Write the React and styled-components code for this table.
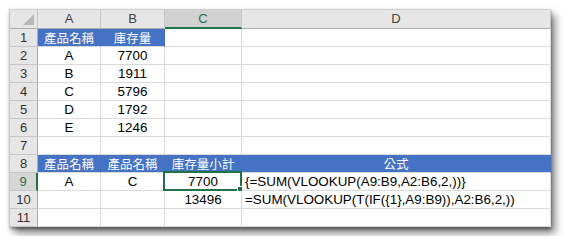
import React from "react";
import styled, { createGlobalStyle } from "styled-components";

const Global = createGlobalStyle`
  html, body { margin: 0; padding: 0; background: #fff; }
  body { font-family: "Liberation Sans", "Noto Sans CJK TC", sans-serif; }
`;

const Page = styled.div`
  padding: 9px;
  width: 541px;
`;

const Sheet = styled.div`
  display: grid;
  grid-template-columns: 28px 63px 64px 77px 309px;
  grid-template-rows: 19px repeat(11, 18px);
  background: #fff;
  box-shadow: 1px 2px 3px rgba(0,0,0,0.4), 5px 6px 8px rgba(0,0,0,0.5);
  border-left: 1px solid #c8c8c8;
  border-top: 1px solid #d0d0d0;
`;

const Corner = styled.div`
  position: relative;
  background: #e6e6e6;
  border-right: 1px solid #c6c6c6;
  border-bottom: 1px solid #ababab;
  box-sizing: border-box;
  &::after {
    content: "";
    position: absolute;
    right: 3px;
    bottom: 3px;
    width: 0;
    height: 0;
    border-left: 11px solid transparent;
    border-bottom: 11px solid #b8b8b8;
  }
`;

const ColHead = styled.div`
  background: ${(p) => (p.$sel ? "#d2d2d2" : "#e6e6e6")};
  color: ${(p) => (p.$sel ? "#217346" : "#444")};
  border-right: 1px solid #c6c6c6;
  border-bottom: ${(p) => (p.$sel ? "2px solid #217346" : "1px solid #ababab")};
  box-sizing: border-box;
  display: flex;
  align-items: center;
  justify-content: center;
  font-family: "Liberation Sans", Arial, sans-serif;
  font-size: 13px;
  line-height: 16px;
`;

const RowHead = styled.div`
  background: ${(p) => (p.$sel ? "#d6d6d6" : "#e6e6e6")};
  color: ${(p) => (p.$sel ? "#217346" : "#333")};
  border-right: ${(p) => (p.$sel ? "2px solid #217346" : "1px solid #ababab")};
  border-bottom: 1px solid #c6c6c6;
  box-sizing: border-box;
  display: flex;
  align-items: center;
  justify-content: center;
  font-family: "Liberation Sans", Arial, sans-serif;
  font-size: 13px;
  line-height: 16px;
`;

const Cell = styled.div`
  position: relative;
  box-sizing: border-box;
  background: ${(p) => (p.$fill ? "#4472c4" : "#fff")};
  color: ${(p) => (p.$fill ? "#fff" : "#000")};
  border-right: 1px solid ${(p) => (p.$fill ? "#4472c4" : "#dadada")};
  border-bottom: 1px solid #dadada;
  display: flex;
  align-items: center;
  justify-content: ${(p) => (p.$left ? "flex-start" : "center")};
  padding: ${(p) => (p.$left ? "0 0 0 3px" : "0")};
  font-family: ${(p) =>
    p.$fill
      ? `"Noto Sans CJK TC", sans-serif`
      : `"Liberation Sans", Arial, sans-serif`};
  font-size: ${(p) => (p.$fill ? "12.5px" : "13.4px")};
  line-height: 16px;
  white-space: nowrap;
`;

const Selection = styled.div`
  position: absolute;
  left: -2px;
  top: -2px;
  right: -1px;
  bottom: -1px;
  border: 2px solid #217346;
  pointer-events: none;
  &::after {
    content: "";
    position: absolute;
    right: -4px;
    bottom: -4px;
    width: 5px;
    height: 5px;
    background: #217346;
    border: 1px solid #fff;
  }
`;

const cols = ["A", "B", "C", "D"];

const rows = [
  [{ t: "產品名稱", fill: 1 }, { t: "庫存量", fill: 1 }, {}, {}],
  [{ t: "A" }, { t: "7700" }, {}, {}],
  [{ t: "B" }, { t: "1911" }, {}, {}],
  [{ t: "C" }, { t: "5796" }, {}, {}],
  [{ t: "D" }, { t: "1792" }, {}, {}],
  [{ t: "E" }, { t: "1246" }, {}, {}],
  [{}, {}, {}, {}],
  [
    { t: "產品名稱", fill: 1 },
    { t: "產品名稱", fill: 1 },
    { t: "庫存量小計", fill: 1 },
    { t: "公式", fill: 1 },
  ],
  [{ t: "A" }, { t: "C" }, { t: "7700", sel: 1 }, { t: "{=SUM(VLOOKUP(A9:B9,A2:B6,2,))}", left: 1 }],
  [{}, {}, { t: "13496" }, { t: "=SUM(VLOOKUP(T(IF({1},A9:B9)),A2:B6,2,))", left: 1 }],
  [{}, {}, {}, {}],
];

export default function App() {
  return (
    <Page>
      <Global />
      <Sheet>
        <Corner />
        {cols.map((c) => (
          <ColHead key={c} $sel={c === "C"}>
            {c}
          </ColHead>
        ))}
        {rows.map((r, i) => (
          <React.Fragment key={i}>
            <RowHead $sel={i === 8}>{i + 1}</RowHead>
            {r.map((c, j) => (
              <Cell key={j} $fill={c.fill} $left={c.left}>
                {c.t}
                {c.sel ? <Selection /> : null}
              </Cell>
            ))}
          </React.Fragment>
        ))}
      </Sheet>
    </Page>
  );
}
